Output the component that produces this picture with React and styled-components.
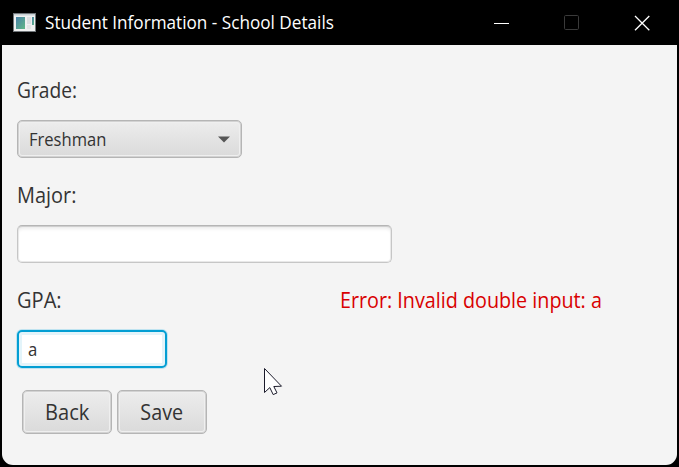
import React from "react";
import styled, { createGlobalStyle } from "styled-components";

const GlobalStyle = createGlobalStyle`
  * { box-sizing: border-box; }
  body {
    margin: 0;
    background: #000;
    font-family: "Open Sans", "Noto Sans", sans-serif;
    overflow: hidden;
  }
`;

const Window = styled.div`
  width: 679px;
  height: 467px;
  display: flex;
  flex-direction: column;
  background: #000;
  padding: 0 2px 2px;
`;

const TitleBar = styled.header`
  height: 45px;
  flex: none;
  display: flex;
  align-items: center;
  padding-left: 11px;
  color: #fff;
`;

const Title = styled.h1`
  margin: 0 0 0 9px;
  padding-bottom: 2px;
  flex: 1;
  font-size: 18px;
  font-weight: 400;
  line-height: 24px;
  white-space: nowrap;
`;

const Label = styled.span`
  display: inline-block;
  white-space: pre;
  transform-origin: ${(p) => (p.$centered ? "50%" : "0")} 50%;
  transform: scaleX(${(p) => p.$fit || 1});
`;

const Controls = styled.div`
  display: flex;
  height: 45px;
`;

const ControlButton = styled.button`
  width: 70px;
  height: 45px;
  padding: 0;
  border: 0;
  background: none;
  display: flex;
  align-items: center;
  justify-content: center;
`;

const Content = styled.main`
  flex: 1;
  background: #f4f4f4;
  border-radius: 0 0 11px 11px;
  padding: 32px 15px 0;
`;

const Field = styled.section`
  height: 105px;
`;

const FieldHeader = styled.div`
  height: 28px;
  margin-bottom: 15px;
  display: flex;
  font-size: 21px;
  line-height: 26px;
  color: #333;
`;

const FieldName = styled.label`
  width: 323px;
`;

const ErrorText = styled.div`
  color: #d90000;
`;

const Select = styled.div`
  width: 225px;
  height: 38px;
  display: flex;
  align-items: center;
  justify-content: space-between;
  padding: 0 11px 0 11px;
  border: 1px solid #b5b5b5;
  border-radius: 5px;
  background: linear-gradient(#ededed, #dadada);
  box-shadow: inset 0 0 0 1px #d2d2d2, inset 0 0 0 2px #efefef;
  font-size: 18px;
  color: #333;
`;

const Input = styled.div`
  width: ${(p) => p.$width}px;
  height: 38px;
  display: flex;
  align-items: center;
  padding: 0 9px;
  background: #fff;
  border-radius: 5px;
  font-size: 18px;
  color: #333;
  border: ${(p) => (p.$focused ? "2px solid #039ed3" : "1px solid #c6c6c6")};
  border-top-color: ${(p) => (p.$focused ? "#039ed3" : "#b5b5b5")};
  box-shadow: ${(p) =>
    p.$focused
      ? "inset 0 0 0 3px #e3f4fa, 0 0 0 1px #bfe3f0"
      : "inset 0 1px 0 #cfcfcf, inset 0 0 0 1px #e9e9e9, inset 0 4px 4px -2px #e4e4e4"};
`;

const Actions = styled.div`
  display: flex;
  gap: 5px;
  padding-left: 5px;
  margin-top: -2px;
`;

const Button = styled.button`
  width: 90px;
  height: 44px;
  padding: 0;
  border: 1px solid #b5b5b5;
  border-radius: 5px;
  background: linear-gradient(#ededed, #dadada);
  box-shadow: inset 0 0 0 1px #d2d2d2, inset 0 0 0 2px #efefef;
  font-family: inherit;
  font-size: 21px;
  line-height: 28px;
  color: #333;
`;

const Pointer = styled.svg`
  position: absolute;
  left: 263px;
  top: 366px;
`;

const AppIcon = () => (
  <svg width="23" height="19" viewBox="0 0 23 19">
    <defs>
      <linearGradient id="pane" x1="0" y1="0" x2="1" y2="1">
        <stop offset="0" stopColor="#4780a8" />
        <stop offset="1" stopColor="#62b886" />
      </linearGradient>
    </defs>
    <rect x="0" y="0" width="23" height="19" fill="#72777b" />
    <rect x="1" y="1" width="21" height="17" fill="#f0f1f1" />
    <rect x="1" y="1" width="21" height="1.5" fill="#c9d1d5" />
    <rect x="3" y="4" width="9" height="12" fill="url(#pane)" />
    <rect x="14" y="4" width="4" height="7" fill="#dddfe2" />
    <rect x="14" y="12" width="4" height="4" fill="#e4e5e6" />
    <rect x="19" y="4" width="2" height="8" fill="url(#pane)" />
  </svg>
);

export default function App() {
  return (
    <>
      <GlobalStyle />
      <Window>
        <TitleBar>
          <AppIcon />
          <Title><Label $fit={0.953}>Student Information - School Details</Label></Title>
          <Controls>
            <ControlButton aria-label="Minimize">
              <svg width="16" height="16"><path d="M0 8.5H15" stroke="#fff" /></svg>
            </ControlButton>
            <ControlButton aria-label="Maximize">
              <svg width="16" height="16"><rect x=".5" y=".5" width="14" height="14" rx="1.2" fill="none" stroke="#3a3a3a" /></svg>
            </ControlButton>
            <ControlButton aria-label="Close">
              <svg width="16" height="16"><path d="M1 1L15.3 15.3M15.3 1L1 15.3" stroke="#fff" strokeWidth="1.3" /></svg>
            </ControlButton>
          </Controls>
        </TitleBar>
        <Content>
          <Field>
            <FieldHeader><FieldName><Label $fit={0.915}>Grade:</Label></FieldName></FieldHeader>
            <Select>
              <Label $fit={0.92}>Freshman</Label>
              <svg width="12" height="7"><path d="M0 .5H12L6 6.5Z" fill="#555" /></svg>
            </Select>
          </Field>
          <Field>
            <FieldHeader><FieldName><Label $fit={0.95}>Major:</Label></FieldName></FieldHeader>
            <Input $width={375} />
          </Field>
          <Field>
            <FieldHeader>
              <FieldName><Label $fit={0.955}>GPA:</Label></FieldName>
              <ErrorText><Label $fit={0.94}>Error: Invalid double input: a</Label></ErrorText>
            </FieldHeader>
            <Input $width={150} $focused><Label $fit={0.93}>a</Label></Input>
          </Field>
          <Actions>
            <Button><Label $centered $fit={0.955}>Back</Label></Button>
            <Button><Label $centered $fit={0.94}>Save</Label></Button>
          </Actions>
        </Content>
      </Window>
      <Pointer width="22" height="30">
        <path d="M1.5 2.5V26.5L6.8 21.6L10.2 28.6L14 26.9L10.8 20.5L18.5 20.2Z" fill="#fff" stroke="#1b1b2b" />
      </Pointer>
    </>
  );
}
